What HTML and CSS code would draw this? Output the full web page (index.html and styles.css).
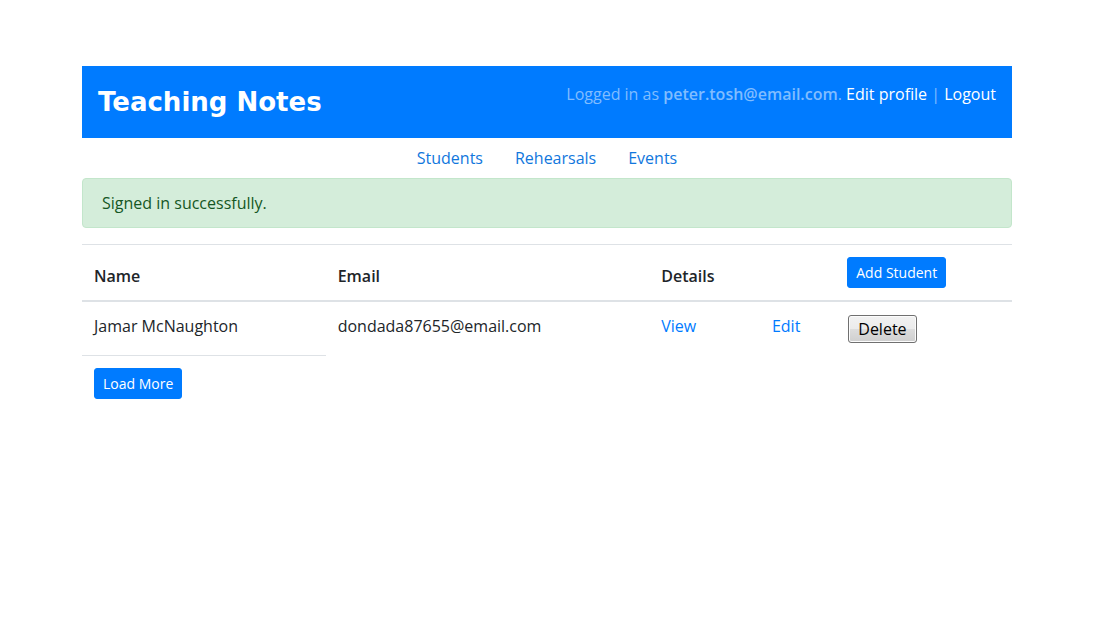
FILE: index.html
```html
<!DOCTYPE html>
<html lang="en">
<head>
<meta charset="utf-8">
<meta name="viewport" content="width=device-width, initial-scale=1">
<title>Teaching Notes</title>
<link rel="stylesheet" href="styles.css">
</head>
<body>
<div class="container">
  <header class="header">
    <h1 class="brand">Teaching Notes</h1>
    <p class="session">Logged in as <strong>peter.tosh@email.com</strong>. <a href="#profile">Edit profile</a> | <a href="#logout">Logout</a></p>
  </header>
  <nav class="nav">
    <a href="#students">Students</a>
    <a href="#rehearsals">Rehearsals</a>
    <a href="#events">Events</a>
  </nav>
  <div class="alert" role="status">Signed in successfully.</div>
  <table class="table">
    <colgroup>
      <col class="col-name"><col class="col-email"><col class="col-view"><col class="col-edit"><col>
    </colgroup>
    <thead>
      <tr>
        <th scope="col">Name</th>
        <th scope="col">Email</th>
        <th scope="col">Details</th>
        <th></th>
        <th class="action"><button type="button" class="btn">Add Student</button></th>
      </tr>
    </thead>
    <tbody>
      <tr>
        <td>Jamar McNaughton</td>
        <td>dondada87655@email.com</td>
        <td><a href="#view">View</a></td>
        <td><a href="#edit">Edit</a></td>
        <td class="action"><button type="button" class="delete">Delete</button></td>
      </tr>
      <tr>
        <td class="action"><button type="button" class="btn">Load More</button></td>
      </tr>
    </tbody>
  </table>
</div>
</body>
</html>
```
FILE: styles.css
```css
* { box-sizing: border-box; }
body {
  margin: 0;
  background: #fff;
  color: #212529;
  font: 16px/24px "Open Sans", "Noto Sans", sans-serif;
}
a { color: #007bff; text-decoration: none; }
.container {
  max-width: 960px;
  margin: 0 auto;
  padding: 66px 15px 24px;
}
.header {
  display: flex;
  justify-content: space-between;
  align-items: flex-start;
  padding: 16px;
  background: #007bff;
}
.brand {
  margin: 0;
  color: #fff;
  font: 700 26px/40px "DejaVu Sans", sans-serif;
}
.session { margin: 0; color: #80bdff; }
.session strong { font-weight: 600; }
.session a { color: #fff; }
.nav { display: flex; justify-content: center; }
.nav a { padding: 8px 16px; color: #1177dd; }
.alert {
  margin-bottom: 16px;
  padding: 12px 19px;
  border: 1px solid #c3e6cb;
  border-radius: 4px;
  background: #d4edda;
  color: #155724;
}
.table {
  width: 100%;
  table-layout: fixed;
  border-spacing: 0;
}
.col-name { width: 26.2%; }
.col-email { width: 34.8%; }
.col-view { width: 11.9%; }
.col-edit { width: 8.1%; }
.table th, .table td {
  padding: 12px;
  border-top: 1px solid #dee2e6;
  text-align: left;
  vertical-align: top;
}
.table th {
  border-bottom: 2px solid #dee2e6;
  font-weight: 600;
  vertical-align: bottom;
}
.table tbody tr:first-child td { border-top: 0; }
.table .action { line-height: 0; }
.btn {
  padding: 4px 8px;
  border: 1px solid #007bff;
  border-radius: 3px;
  background: #007bff;
  color: #fff;
  font: 14px/21px "Open Sans", sans-serif;
}
.delete {
  height: 28px;
  margin: 1px 1px 0;
  padding: 0 9px;
  border: 1px solid #707070;
  border-radius: 3px;
  background: linear-gradient(#f2f2f2 0%, #ebebeb 50%, #dddddd 50%, #cfcfcf 100%);
  box-shadow: inset 0 0 0 1px #fcfcfc;
  color: #000;
  font: 16px/24px "Open Sans", sans-serif;
}
```
